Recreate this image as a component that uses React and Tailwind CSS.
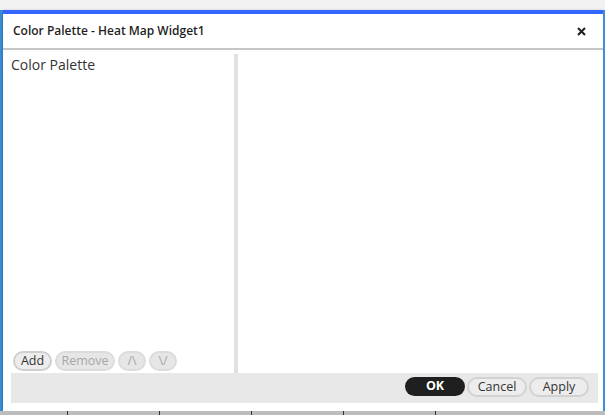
import React from 'react'

const font = { fontFamily: '"Open Sans", "Liberation Sans", sans-serif' }

const PillButton = ({ children, disabled, className = '' }) => (
  <button
    className={`h-[20px] rounded-full border-2 text-[12.5px] leading-none flex items-center justify-center ${
      disabled
        ? 'border-[#dcdcdc] bg-[#e6e6e6] text-[#a6a6a6]'
        : 'border-[#cfcfcf] bg-[#ededed] text-[#333]'
    } ${className}`}
  >
    {children}
  </button>
)

const App = () => {
  return (
    <div className='w-[605px] h-[415px] bg-[#f2f2f2] overflow-hidden flex flex-col' style={font}>
      <div className='flex flex-1'>
        <div className='w-[3px] mt-[10px] bg-[#3b8fd9]' />
        <div className='w-[600px] mt-[10px] h-[401px] bg-white flex flex-col shadow-[0_1px_3px_rgba(0,0,0,0.35)]'>
          <div className='h-[4px] shrink-0 bg-[#3366ff]' />
          <div className='h-[36px] shrink-0 flex items-center justify-between pl-[10px] pr-[17px] border-b-2 border-[#c6c6c6]'>
            <span className='text-[12px] font-semibold text-[#1f1f1f]'>Color Palette - Heat Map Widget1</span>
            <svg width='9' height='9' viewBox='0 0 9 9'>
              <path d='M1 1L8 8M8 1L1 8' stroke='#1f1f1f' strokeWidth='2' />
            </svg>
          </div>
          <div className='flex h-[323px] shrink-0 px-[7px] pt-[4px]'>
            <div className='w-[224px] flex flex-col justify-between pb-[2px]'>
              <p className='pl-[1px] text-[14px] text-[#333] leading-[16px] mt-[3px]'>Color Palette</p>
              <div className='flex gap-[3px] pl-[3px]'>
                <PillButton className='w-[39px]'>Add</PillButton>
                <PillButton disabled className='w-[60px]'>Remove</PillButton>
                <PillButton disabled className='w-[28px]'>/\</PillButton>
                <PillButton disabled className='w-[28px]'>\/</PillButton>
              </div>
            </div>
            <div className='w-[4px] bg-[#e1e1e1]' />
            <div className='flex-1' />
          </div>
          <div className='mx-[8px] mr-[5px] h-[30px] shrink-0 bg-[#e8e8e8] flex justify-end items-start pt-[4px] pr-[9px] gap-[2px]'>
            <button className='w-[60px] h-[19px] rounded-full bg-[#1f1f1f] text-white text-[12.5px] font-bold leading-none'>OK</button>
            <button className='w-[60px] h-[20px] rounded-full border-2 border-[#d2d2d2] bg-[#ededed] text-[#333] text-[12.5px] leading-none'>Cancel</button>
            <button className='w-[60px] h-[20px] rounded-full border-2 border-[#d2d2d2] bg-[#ededed] text-[#333] text-[12.5px] leading-none'>Apply</button>
          </div>
        </div>
        <div className='flex-1 mt-[10px] bg-[#3b8fd9]' />
      </div>
      <div className='h-[4px] bg-[#bdbdbd] flex'>
        <div className='w-[67px]' />
        <div className='w-[1px] bg-[#333]' />
        <div className='w-[91px]' />
        <div className='w-[1px] bg-[#333]' />
        <div className='w-[91px]' />
        <div className='w-[1px] bg-[#333]' />
        <div className='w-[91px]' />
        <div className='w-[1px] bg-[#333]' />
        <div className='w-[91px]' />
        <div className='w-[1px] bg-[#333]' />
      </div>
    </div>
  )
}

export default App
